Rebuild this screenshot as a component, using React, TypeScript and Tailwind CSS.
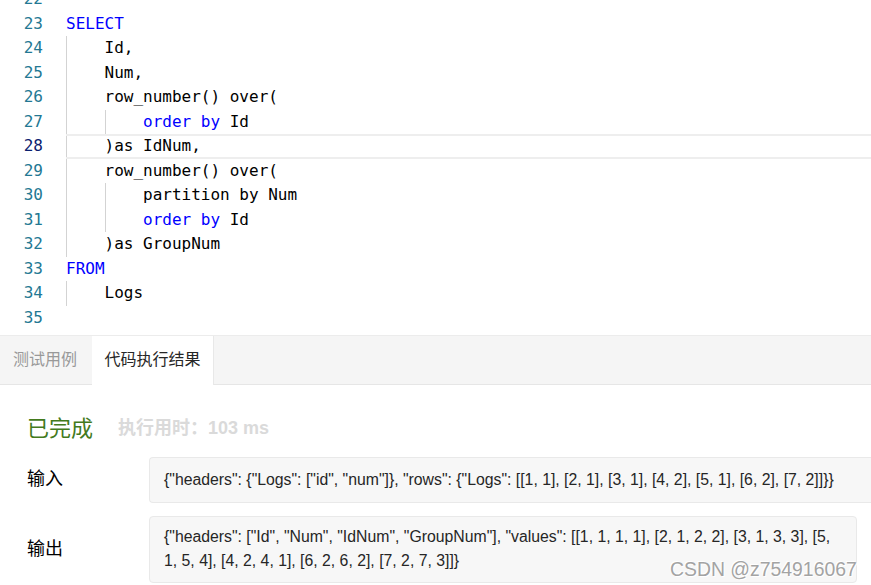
import React from "react";

type Tok = { t: string; k?: boolean };
type Line = { n: number; indent: number; toks: Tok[]; active?: boolean };

const lines: Line[] = [
  { n: 22, indent: 0, toks: [] },
  { n: 23, indent: 0, toks: [{ t: "SELECT", k: true }] },
  { n: 24, indent: 1, toks: [{ t: "Id," }] },
  { n: 25, indent: 1, toks: [{ t: "Num," }] },
  { n: 26, indent: 1, toks: [{ t: "row_number() over(" }] },
  { n: 27, indent: 2, toks: [{ t: "order", k: true }, { t: " " }, { t: "by", k: true }, { t: " Id" }] },
  { n: 28, indent: 1, toks: [{ t: ")as IdNum," }], active: true },
  { n: 29, indent: 1, toks: [{ t: "row_number() over(" }] },
  { n: 30, indent: 2, toks: [{ t: "partition by Num" }] },
  { n: 31, indent: 2, toks: [{ t: "order", k: true }, { t: " " }, { t: "by", k: true }, { t: " Id" }] },
  { n: 32, indent: 1, toks: [{ t: ")as GroupNum" }] },
  { n: 33, indent: 0, toks: [{ t: "FROM", k: true }] },
  { n: 34, indent: 1, toks: [{ t: "Logs" }] },
  { n: 35, indent: 0, toks: [] },
];

const mono = { fontFamily: '"DejaVu Sans Mono", "Liberation Mono", monospace' };
const sans = { fontFamily: '"Liberation Sans", "Noto Sans CJK SC", sans-serif' };

export default function App() {
  return (
    <div className="relative w-[871px] h-[585px] overflow-hidden bg-white" style={sans}>
      {/* Editor */}
      <div className="-mt-[12.75px] text-[16px]" style={mono}>
        {lines.map((l) => (
          <div key={l.n} className="flex h-[24.5px] items-center leading-[24.5px]">
            <div
              className={
                "w-[43px] text-right " + (l.active ? "text-[#0b216f]" : "text-[#237893]")
              }
            >
              {l.n}
            </div>
            <div
              className={
                "ml-[23px] flex h-full flex-1 items-center " +
                (l.active ? "border-y-2 border-[#eeeeee]" : "")
              }
            >
              {Array.from({ length: l.indent }).map((_, i) => (
                <span
                  key={i}
                  className="inline-block h-full w-[38.5px] border-l border-[#d3d3d3] shrink-0"
                />
              ))}
              <span className="whitespace-pre text-black">
                {l.toks.map((tk, i) => (
                  <span key={i} className={tk.k ? "text-[#0000ff]" : ""}>
                    {tk.t}
                  </span>
                ))}
              </span>
            </div>
          </div>
        ))}
      </div>

      {/* Tabs */}
      <div className="mt-[4.5px] flex h-[50px] border-t border-[#ececec] border-b border-b-[#e6e6e6] bg-[#f5f5f5] text-[16px]">
        <div className="flex items-center pl-[13px] pr-[15px] text-[#999999]">测试用例</div>
        <div className="-mb-px flex w-[122px] items-center justify-center border-r border-[#e8e8e8] bg-white text-[#262626]">
          代码执行结果
        </div>
      </div>

      {/* Result */}
      <div className="flex items-center pl-[27px] pt-[27px]">
        <span className="text-[22px] text-[#437a1d]">已完成</span>
        <span className="ml-[25px] text-[18px] font-semibold text-[#dadada]">执行用时：103 ms</span>
      </div>

      <div className="mt-[12px] flex items-center pl-[27px]">
        <div className="w-[122px] text-[18px] text-black">输入</div>
        <div className="flex h-[46px] flex-1 items-center rounded-l-[4px] border border-r-0 border-[#e9e9e9] bg-[#f7f7f7] pl-[14px] text-[15.8px] text-[#262626] whitespace-nowrap">
          {'{"headers": {"Logs": ["id", "num"]}, "rows": {"Logs": [[1, 1], [2, 1], [3, 1], [4, 2], [5, 1], [6, 2], [7, 2]]}}'}
        </div>
      </div>

      <div className="mt-[13px] flex items-center pl-[27px]">
        <div className="w-[122px] text-[18px] text-black">输出</div>
        <div className="flex h-[67px] w-[708px] flex-col justify-center rounded-[4px] border border-[#e9e9e9] bg-[#f7f7f7] pl-[14px] text-[15.8px] leading-[24px] text-[#262626] whitespace-nowrap">
          <div>{'{"headers": ["Id", "Num", "IdNum", "GroupNum"], "values": [[1, 1, 1, 1], [2, 1, 2, 2], [3, 1, 3, 3], [5,'}</div>
          <div>{"1, 5, 4], [4, 2, 4, 1], [6, 2, 6, 2], [7, 2, 7, 3]]}"}</div>
        </div>
      </div>

      {/* Watermark */}
      <div
        className="absolute left-[670px] top-[555px] text-[19.4px] text-[#a3a3a3]"
        style={{ fontFamily: '"Liberation Sans", sans-serif', textShadow: "1px 1px 0 #fff, -1px -1px 0 #fff" }}
      >
        CSDN @z754916067
      </div>
    </div>
  );
}
